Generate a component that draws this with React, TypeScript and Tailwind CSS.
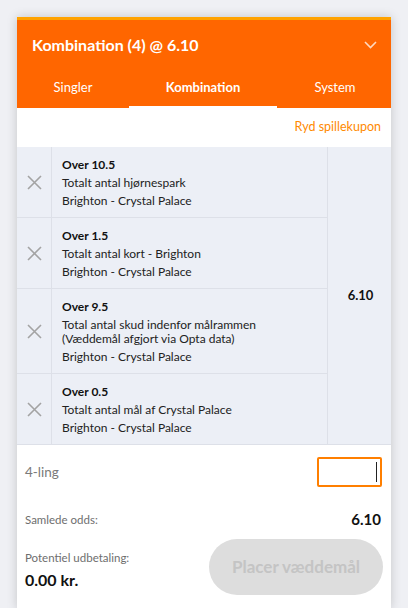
import React from 'react'

type Leg = { title: string; market: string[]; match: string }

const legs: Leg[] = [
  { title: 'Over 10.5', market: ['Totalt antal hjørnespark'], match: 'Brighton - Crystal Palace' },
  { title: 'Over 1.5', market: ['Totalt antal kort - Brighton'], match: 'Brighton - Crystal Palace' },
  {
    title: 'Over 9.5',
    market: ['Total antal skud indenfor målrammen', '(Væddemål afgjort via Opta data)'],
    match: 'Brighton - Crystal Palace',
  },
  { title: 'Over 0.5', market: ['Totalt antal mål af Crystal Palace'], match: 'Brighton - Crystal Palace' },
]

const CloseIcon = () => (
  <svg width="15" height="15" viewBox="0 0 15 15" fill="none">
    <path d="M1 1L14 14M14 1L1 14" stroke="#a3a3a3" strokeWidth="1.6" />
  </svg>
)

const Chevron = () => (
  <svg width="13" height="8" viewBox="0 0 13 8" fill="none">
    <path d="M1 1L6.5 6.5L12 1" stroke="#ffd9bf" strokeWidth="1.6" />
  </svg>
)

const App: React.FC = () => {
  return (
    <div
      className="min-h-[608px] bg-[#eff0f4] px-[17px] pt-[17px]"
      style={{ fontFamily: 'Lato, "Noto Sans", sans-serif' }}
    >
      <div className="bg-white shadow-[0_0_10px_rgba(0,0,0,0.18)] min-h-[591px]">
        {/* Header */}
        <div className="bg-[#ff6600] border-t-[3px] border-[#ffa200]">
          <div className="h-[50px] flex items-center justify-between pl-[15px] pr-[14px]">
            <span className="text-white font-bold text-[16px]">Kombination (4) @ 6.10</span>
            <Chevron />
          </div>
          <div className="flex h-[38px] text-white text-[13px]">
            <div className="w-[112px] flex items-center justify-center pb-[3px]">Singler</div>
            <div className="w-[148px] flex flex-col">
              <div className="flex-1 flex items-center justify-center font-bold pb-[1px]">Kombination</div>
              <div className="h-[2px] bg-white" />
            </div>
            <div className="flex-1 flex items-center justify-center pb-[3px] pl-[2px]">System</div>
          </div>
        </div>

        {/* Clear link */}
        <div className="h-[39px] flex items-center justify-end pr-[10px]">
          <span className="text-[#ff8a00] text-[12.5px]">Ryd spillekupon</span>
        </div>

        {/* Legs */}
        <div className="flex bg-[#eceff6] border-b border-[#dde0e8]">
          <div className="flex-1">
            {legs.map((leg, i) => (
              <div key={i} className={'flex ' + (i > 0 ? 'border-t border-[#dde0e8]' : '')}>
                <div className="w-[35px] shrink-0 border-r border-[#dde0e8] flex items-center justify-center">
                  <CloseIcon />
                </div>
                <div className="flex-1 border-r border-[#dde0e8] pl-[10px] pt-[11px] pb-[9px] text-[12px] leading-[14px] text-[#222] flex flex-col gap-[4px]">
                  <div className="font-bold text-[#111]">{leg.title}</div>
                  <div>
                    {leg.market.map((m, j) => (
                      <div key={j}>{m}</div>
                    ))}
                  </div>
                  <div>{leg.match}</div>
                </div>
              </div>
            ))}
          </div>
          <div className="w-[63px] flex items-center justify-center font-bold text-[13px] text-[#111] pl-[2px]">
            6.10
          </div>
        </div>

        {/* Stake */}
        <div className="flex items-center justify-between pl-[8px] pr-[9px] pt-[12px]">
          <span className="text-[#7a7a7a] text-[13.5px]">4-ling</span>
          <div className="w-[65px] h-[30px] border-2 border-[#ff7f00] rounded-[2px] flex items-center justify-end pr-[3px]">
            <div className="w-[1.5px] h-[20px] bg-[#222]" />
          </div>
        </div>

        <div className="flex items-center justify-between pl-[8px] pr-[10px] pt-[21px]">
          <span className="text-[#6e6e6e] text-[11.5px]">Samlede odds:</span>
          <span className="font-bold text-[15px] text-[#111]">6.10</span>
        </div>

        <div className="flex items-center justify-between pl-[8px] pr-[8px] pt-[8px] pb-[14px]">
          <div className="flex flex-col pt-[8px]">
            <span className="text-[#6e6e6e] text-[11.5px]">Potentiel udbetaling:</span>
            <span className="font-bold text-[16px] text-[#111] mt-[2px]">0.00 kr.</span>
          </div>
          <div className="w-[174px] h-[56px] rounded-full bg-[#dddddd] flex items-center justify-center text-[#c4c4c4] font-bold text-[17px]">
            Placer væddemål
          </div>
        </div>
      </div>
    </div>
  )
}

export default App
